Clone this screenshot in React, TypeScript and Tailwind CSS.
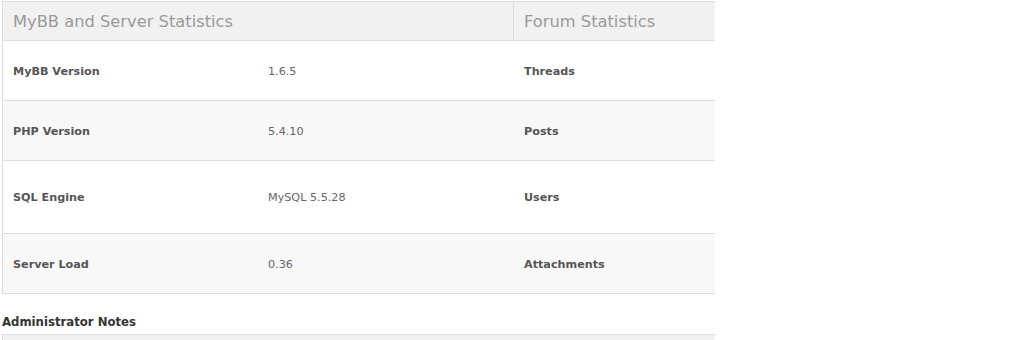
import React from "react";

const rows = [
  { label: "MyBB Version", value: "1.6.5", right: "Threads", h: "h-[60px]", bg: "bg-white" },
  { label: "PHP Version", value: "5.4.10", right: "Posts", h: "h-[60px]", bg: "bg-[#f8f8f8]" },
  { label: "SQL Engine", value: "MySQL 5.5.28", right: "Users", h: "h-[73px]", bg: "bg-white" },
  { label: "Server Load", value: "0.36", right: "Attachments", h: "h-[60px]", bg: "bg-[#f8f8f8]" },
];

export default function App() {
  return (
    <div className="w-[1035px] h-[340px] bg-white overflow-hidden pt-[1px] pl-[2px] font-['DejaVu_Sans',Verdana,sans-serif]">
      <div className="w-[713px] overflow-hidden border-t border-l border-[#dedede]">
        <div className="flex h-[39px] bg-[#f1f1f1] border-b border-[#dedede] pt-[2px]">
          <div className="w-[511px] shrink-0 border-r border-[#dedede] -mt-[2px] pt-[2px] pl-[10px] flex items-center text-[16.3px] text-[#9a9a9a]">
            MyBB and Server Statistics
          </div>
          <div className="pl-[10px] flex items-center text-[16.3px] text-[#9a9a9a] whitespace-nowrap">
            Forum Statistics
          </div>
        </div>
        {rows.map((r) => (
          <div key={r.label} className={`flex ${r.h} ${r.bg} border-b border-[#dedede] text-[11.2px] pt-[3px]`}>
            <div className="w-[255px] shrink-0 pl-[10px] flex items-center font-bold text-[#555]">{r.label}</div>
            <div className="w-[256px] shrink-0 pl-[10px] flex items-center text-[#666]">{r.value}</div>
            <div className="pl-[10px] flex items-center font-bold text-[#555] whitespace-nowrap">{r.right}</div>
          </div>
        ))}
      </div>
      <div className="mt-[20px] text-[13px] font-bold text-[#333] font-['DejaVu_Sans_Condensed',sans-serif] leading-[16px]">
        Administrator Notes
      </div>
      <div className="mt-[4px] w-[713px] h-[20px] border-t border-l border-[#dedede] bg-[#f1f1f1]"></div>
    </div>
  );
}
